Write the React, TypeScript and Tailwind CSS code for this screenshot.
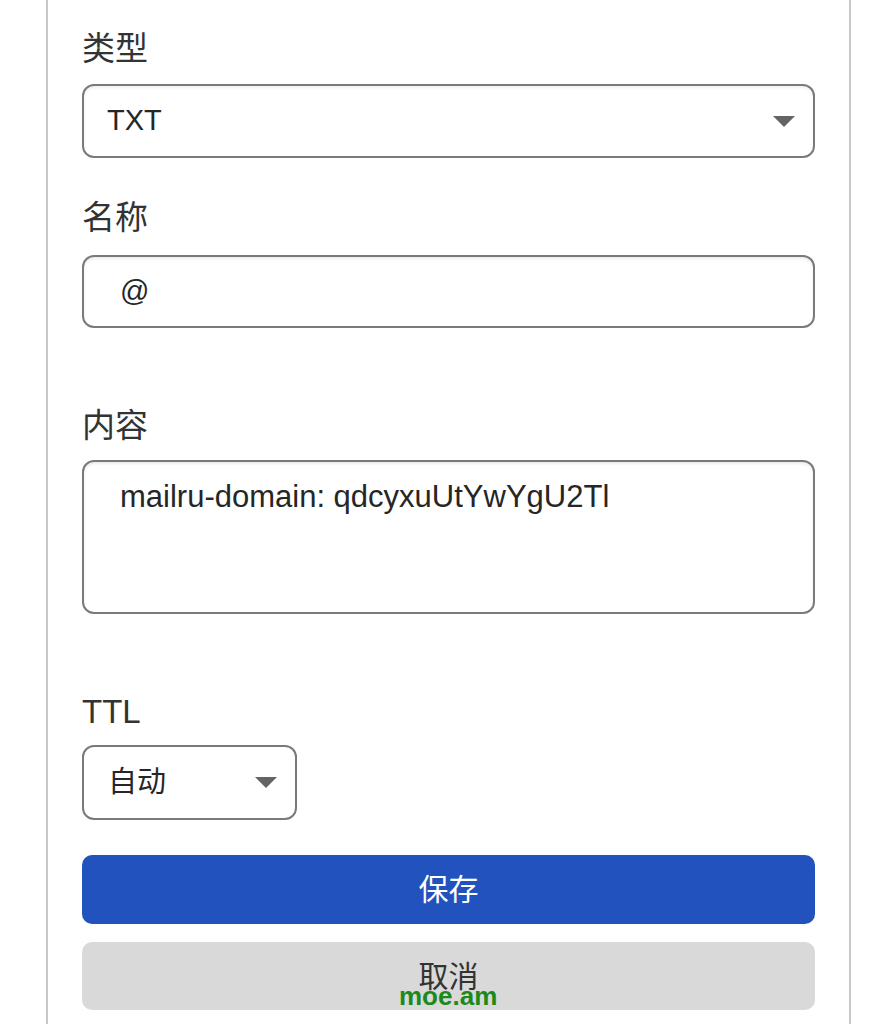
import React from "react";

const font = { fontFamily: '"Liberation Sans", "Noto Sans CJK SC", sans-serif' };

function Caret() {
  return (
    <svg width="22" height="11" viewBox="0 0 22 11" className="shrink-0">
      <polygon points="0,0 22,0 11,11" fill="#646464" />
    </svg>
  );
}

export default function App() {
  return (
    <div className="min-h-[1024px] bg-white" style={font}>
      <div className="ml-[46px] w-[805px] min-h-[1024px] border-x-2 border-[#c8c8c8] px-[34px] pt-[29px] text-[#333]">
        <div className="h-[40px] text-[33px] leading-[40px]">类型</div>
        <div className="mt-[15px] flex h-[74px] items-center justify-between rounded-[12px] border-2 border-[#7a7a7a] pl-[23px] pr-[18px] shadow-[inset_0_2px_3px_rgba(0,0,0,0.06)]">
          <span className="text-[29px] text-[#262626]">TXT</span>
          <Caret />
        </div>

        <div className="mt-[40px] h-[40px] text-[33px] leading-[40px]">名称</div>
        <div className="mt-[17px] flex h-[73px] items-center rounded-[12px] border-2 border-[#7a7a7a] pl-[36px] shadow-[inset_0_2px_3px_rgba(0,0,0,0.08)]">
          <span className="text-[29px] text-[#262626]">@</span>
        </div>

        <div className="mt-[78px] h-[40px] text-[33px] leading-[40px]">内容</div>
        <div className="mt-[14px] h-[154px] rounded-[12px] border-2 border-[#7a7a7a] pl-[36px] pt-[17px] shadow-[inset_0_2px_3px_rgba(0,0,0,0.08)]">
          <span className="text-[31px] leading-[36px] text-[#262626]">mailru-domain: qdcyxuUtYwYgU2Tl</span>
        </div>

        <div className="mt-[78px] h-[40px] text-[33px] leading-[40px]">TTL</div>
        <div className="mt-[13px] flex h-[75px] w-[215px] items-center justify-between rounded-[12px] border-2 border-[#7a7a7a] pl-[24px] pr-[18px]">
          <span className="text-[29px] text-[#262626]">自动</span>
          <Caret />
        </div>

        <div className="mt-[35px] flex h-[69px] items-center justify-center rounded-[10px] bg-[#2152be] text-[30px] text-white">
          保存
        </div>
        <div className="relative mt-[18px] flex h-[68px] items-center justify-center rounded-[10px] bg-[#d9d9d9] text-[30px] text-[#333]">
          取消
          <span className="absolute left-[317px] top-[39px] text-[26px] font-bold leading-[30px] text-[#1b8a1b]">moe.am</span>
        </div>
      </div>
    </div>
  );
}
